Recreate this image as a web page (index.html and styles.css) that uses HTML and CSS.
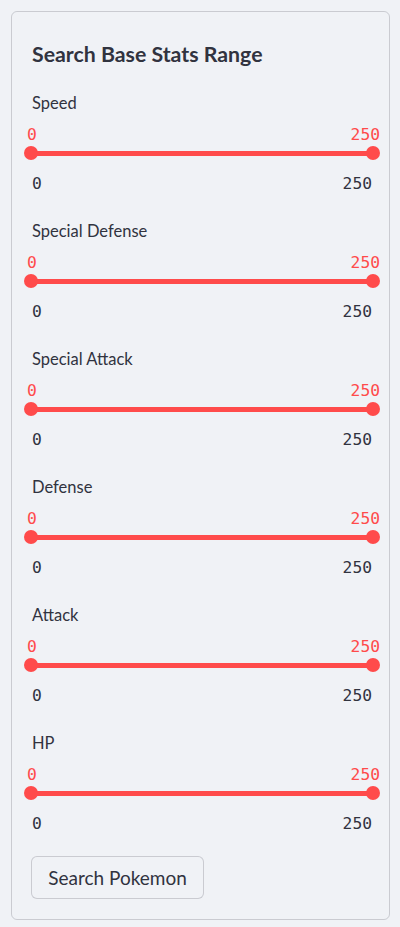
FILE: index.html
```html
<!DOCTYPE html>
<html>
<head>
<meta charset="utf-8">
<link rel="stylesheet" href="styles.css">
</head>
<body>
<form class="stats-form">
  <h3 class="form-title">Search Base Stats Range</h3>
  <div class="sliders">
    <div class="slider-group">
      <label class="slider-label">Speed</label>
      <div class="slider-values"><span>0</span><span>250</span></div>
      <div class="slider-track"><span class="thumb thumb-min"></span><span class="thumb thumb-max"></span></div>
      <div class="slider-ticks"><span>0</span><span>250</span></div>
    </div>
    <div class="slider-group">
      <label class="slider-label">Special Defense</label>
      <div class="slider-values"><span>0</span><span>250</span></div>
      <div class="slider-track"><span class="thumb thumb-min"></span><span class="thumb thumb-max"></span></div>
      <div class="slider-ticks"><span>0</span><span>250</span></div>
    </div>
    <div class="slider-group">
      <label class="slider-label">Special Attack</label>
      <div class="slider-values"><span>0</span><span>250</span></div>
      <div class="slider-track"><span class="thumb thumb-min"></span><span class="thumb thumb-max"></span></div>
      <div class="slider-ticks"><span>0</span><span>250</span></div>
    </div>
    <div class="slider-group">
      <label class="slider-label">Defense</label>
      <div class="slider-values"><span>0</span><span>250</span></div>
      <div class="slider-track"><span class="thumb thumb-min"></span><span class="thumb thumb-max"></span></div>
      <div class="slider-ticks"><span>0</span><span>250</span></div>
    </div>
    <div class="slider-group">
      <label class="slider-label">Attack</label>
      <div class="slider-values"><span>0</span><span>250</span></div>
      <div class="slider-track"><span class="thumb thumb-min"></span><span class="thumb thumb-max"></span></div>
      <div class="slider-ticks"><span>0</span><span>250</span></div>
    </div>
    <div class="slider-group">
      <label class="slider-label">HP</label>
      <div class="slider-values"><span>0</span><span>250</span></div>
      <div class="slider-track"><span class="thumb thumb-min"></span><span class="thumb thumb-max"></span></div>
      <div class="slider-ticks"><span>0</span><span>250</span></div>
    </div>
  </div>
  <button type="button" class="submit-btn">Search Pokemon</button>
</form>
</body>
</html>
```
FILE: styles.css
```css
* { box-sizing: border-box; }
html, body {
  margin: 0;
  padding: 0;
  background: #f0f2f6;
}
body {
  padding: 11px 10px 7px 11px;
  font-family: Lato, "Noto Sans", sans-serif;
  color: #31333f;
}
.stats-form {
  border: 1px solid rgba(49, 51, 63, 0.2);
  border-radius: 6px;
  padding: 30px 16px 20px 20px;
  height: 909px;
}
.form-title {
  margin: 0;
  font-size: 21.3px;
  line-height: 25px;
  font-weight: 700;
}
.sliders {
  margin-top: 24px;
  display: flex;
  flex-direction: column;
  gap: 27px;
}
.slider-group {
  display: flex;
  flex-direction: column;
}
.slider-label {
  font-size: 16.5px;
  line-height: 24px;
  height: 24px;
}
.slider-values, .slider-ticks {
  display: flex;
  justify-content: space-between;
  font-family: "DejaVu Sans Mono", "Liberation Mono", monospace;
  font-size: 16.3px;
  line-height: 16px;
  height: 16px;
}
.slider-values {
  color: #ff4b4b;
  margin-top: 12px;
  margin-left: -5px;
  margin-right: -7px;
}
.slider-track {
  position: relative;
  margin-top: 3px;
  height: 14px;
  margin-left: -1px;
}
.slider-track::before {
  content: "";
  position: absolute;
  left: 0;
  right: 0;
  top: 5px;
  height: 5px;
  background: #ff4b4b;
}
.thumb {
  position: absolute;
  top: 0;
  width: 14px;
  height: 14px;
  border-radius: 50%;
  background: #ff4b4b;
}
.thumb-min { left: -7px; }
.thumb-max { right: -7px; }
.slider-ticks {
  margin-top: 16px;
  padding-right: 1px;
}
.submit-btn {
  margin-top: 24px;
  height: 43px;
  width: 173px;
  margin-left: -1px;
  border: 1px solid rgba(49, 51, 63, 0.2);
  border-radius: 6px;
  background: #f0f2f6;
  color: #31333f;
  font-family: Lato, "Noto Sans", sans-serif;
  font-size: 19px;
  padding: 0;
}
```
